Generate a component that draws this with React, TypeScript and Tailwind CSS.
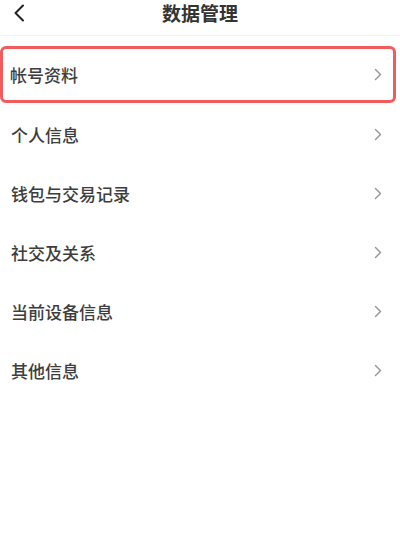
import React from "react";

const items = ["个人信息", "钱包与交易记录", "社交及关系", "当前设备信息", "其他信息"];

function Chevron() {
  return (
    <svg width="8" height="13" viewBox="0 0 8 13" fill="none" className="shrink-0">
      <path d="M1.5 1.5 L6.5 6.5 L1.5 11.5" stroke="#9a9a9a" strokeWidth="1.5" strokeLinecap="round" strokeLinejoin="round" />
    </svg>
  );
}

export default function App() {
  return (
    <div
      className="w-[400px] h-[544px] bg-white text-[#3d3d3d] overflow-hidden"
      style={{ fontFamily: '"Noto Sans CJK SC", "Noto Sans", sans-serif' }}
    >
      {/* Header */}
      <div className="relative h-[36px] flex items-center justify-center border-b border-[#f2f2f2]">
        <svg width="12" height="18" viewBox="0 0 12 18" fill="none" className="absolute left-[13px] top-[4px]">
          <path d="M10 1.5 L2.5 9 L10 16.5" stroke="#222" strokeWidth="2" strokeLinecap="round" strokeLinejoin="round" />
        </svg>
        <h1 className="text-[19px] font-bold text-[#333] leading-none -mt-[10px]">数据管理</h1>
      </div>

      {/* List */}
      <div className="pt-[10px]">
        <div className="h-[57px] mr-[4px] mb-[2px] flex items-center justify-between border-[3px] border-[#f25c5c] rounded-[6px] pl-[7px] pr-[11px]">
          <span className="text-[17px] font-medium">帐号资料</span>
          <Chevron />
        </div>
        {items.map((label) => (
          <div key={label} className="h-[59px] flex items-center justify-between pl-[11px] pr-[18px]">
            <span className="text-[17px] font-medium">{label}</span>
            <Chevron />
          </div>
        ))}
      </div>
    </div>
  );
}
